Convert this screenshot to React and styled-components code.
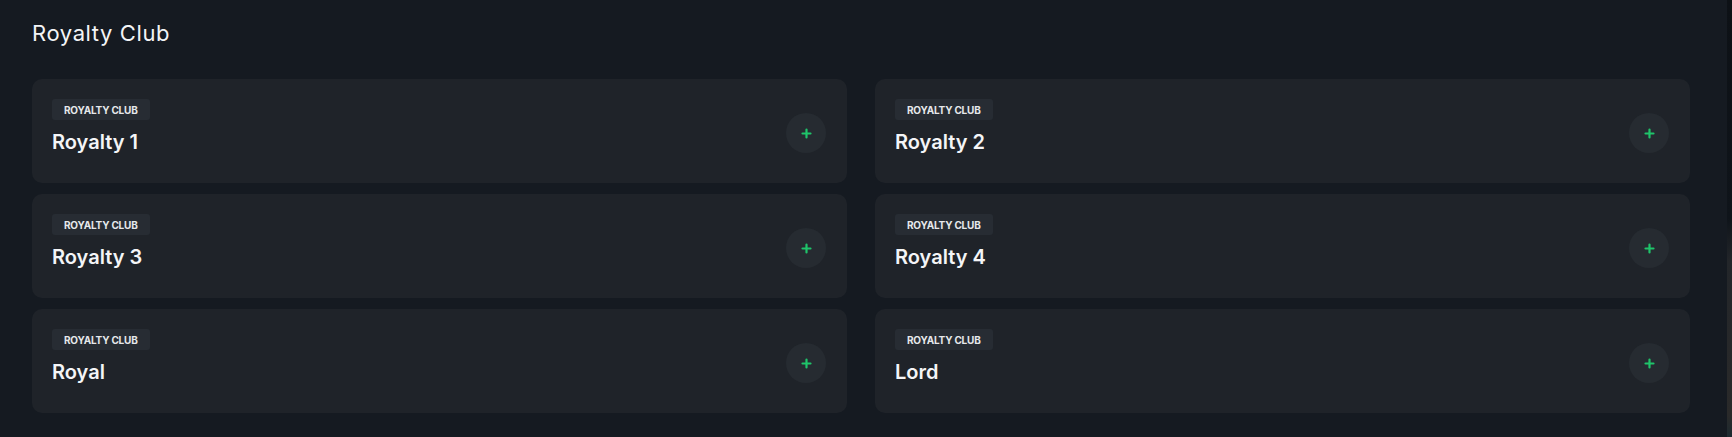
import React from "react";
import styled, { createGlobalStyle } from "styled-components";

const Global = createGlobalStyle`
  html, body {
    margin: 0;
    padding: 0;
    background: #151a21;
  }
  body {
    font-family: Inter, "Noto Sans", "Liberation Sans", sans-serif;
    color: #f1f3f5;
    -webkit-font-smoothing: antialiased;
  }
`;

const Page = styled.div`
  display: flex;
  width: 1732px;
  height: 437px;
  background: #151a21;
  overflow: hidden;
`;

const Main = styled.main`
  flex: 1;
  padding: 20px 37px 0 32px;
  display: flex;
  flex-direction: column;
`;

const ScrollTrack = styled.div`
  width: 5px;
  flex: none;
  background: linear-gradient(
    to bottom,
    #0d1116 0%,
    #0f141a 50%,
    #23262a 60%,
    #2a2a2a 95%,
    #1d2a30 100%
  );
`;

const Heading = styled.h2`
  margin: 0;
  font-size: 22px;
  line-height: 27px;
  font-weight: 400;
  letter-spacing: 0.6px;
  color: #f3f4f6;
`;

const Grid = styled.div`
  margin-top: 32px;
  display: grid;
  grid-template-columns: 1fr 1fr;
  column-gap: 28px;
  row-gap: 11px;
`;

const Card = styled.div`
  height: 104px;
  box-sizing: border-box;
  padding: 20px 21px 0 20px;
  border-radius: 10px;
  background: #1f2329;
  display: flex;
  justify-content: space-between;
  align-items: flex-start;
`;

const Info = styled.div`
  display: flex;
  flex-direction: column;
  align-items: flex-start;
  gap: 10px;
`;

const Badge = styled.span`
  display: inline-flex;
  align-items: center;
  height: 21px;
  padding: 0 12px;
  border-radius: 3px;
  background: #272c33;
  font-size: 10px;
  font-weight: 700;
  letter-spacing: -0.2px;
  text-transform: uppercase;
  color: #e6e8eb;
`;

const Title = styled.div`
  font-size: 20px;
  line-height: 24px;
  font-weight: 600;
  letter-spacing: 0;
  color: #f4f5f7;
`;

const AddButton = styled.button`
  width: 40px;
  height: 40px;
  margin-top: 14px;
  border: none;
  border-radius: 50%;
  background: #262b31;
  display: flex;
  align-items: center;
  justify-content: center;
  padding: 0;
  cursor: pointer;
`;

const PlusIcon = () => (
  <svg width="11" height="11" viewBox="0 0 11 11" fill="none">
    <path
      d="M5.5 1.5v8M1.5 5.5h8"
      stroke="#1fc46a"
      strokeWidth="2.2"
      strokeLinecap="round"
    />
  </svg>
);

const items = [
  "Royalty 1",
  "Royalty 2",
  "Royalty 3",
  "Royalty 4",
  "Royal",
  "Lord",
];

export default function App() {
  return (
    <Page>
      <Global />
      <Main>
        <Heading>Royalty Club</Heading>
        <Grid>
          {items.map((name) => (
            <Card key={name}>
              <Info>
                <Badge>Royalty Club</Badge>
                <Title>{name}</Title>
              </Info>
              <AddButton aria-label={`Add ${name}`}>
                <PlusIcon />
              </AddButton>
            </Card>
          ))}
        </Grid>
      </Main>
      <ScrollTrack />
    </Page>
  );
}
